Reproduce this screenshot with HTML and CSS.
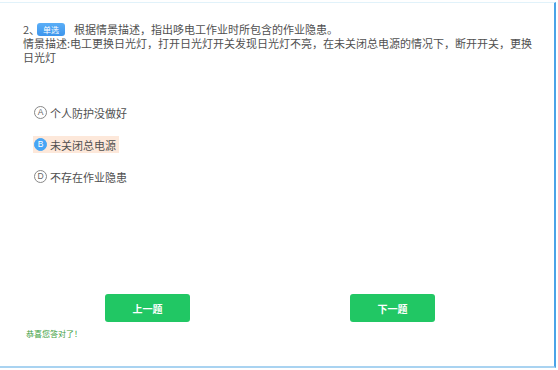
FILE: index.html
```html
<!DOCTYPE html>
<html lang="zh">
<head>
<meta charset="utf-8">
<link rel="stylesheet" href="styles.css">
</head>
<body>
<div class="frame">
  <div class="question">
    <div class="title">2、<span class="badge">单选</span>根据情景描述，指出哆电工作业时所包含的作业隐患。</div>
    <div class="desc">情景描述:电工更换日光灯，打开日光灯开关发现日光灯不亮，在未关闭总电源的情况下，断开开关，更换日光灯</div>
  </div>
  <ul class="options">
    <li class="option"><span class="mark">A</span><span class="label">个人防护没做好</span></li>
    <li class="option selected"><span class="mark">B</span><span class="label">未关闭总电源</span></li>
    <li class="option"><span class="mark">D</span><span class="label">不存在作业隐患</span></li>
  </ul>
  <div class="buttons">
    <button class="btn">上一题</button>
    <button class="btn">下一题</button>
  </div>
  <div class="feedback">恭喜您答对了！</div>
</div>
</body>
</html>
```

FILE: styles.css
```css
html, body {
  margin: 0;
  padding: 0;
  background: #ffffff;
}
body {
  font-family: "Noto Sans CJK SC", "Noto Sans", sans-serif;
  color: #505050;
}
.frame {
  box-sizing: border-box;
  margin-top: 2px;
  width: 556px;
  height: 366px;
  border-top: 1px solid #e1f2fa;
  border-right: 2px solid #4aa3e8;
  border-bottom: 2px solid #a9d3f1;
}
.question {
  padding: 19px 0 0 23px;
  width: 520px;
  font-size: 11px;
  line-height: 14px;
}
.badge {
  display: inline-block;
  margin: 0 9px 0 -3px;
  padding: 0 6px;
  height: 13px;
  line-height: 13px;
  font-size: 8px;
  color: #ffffff;
  background: linear-gradient(#5aaef7, #3d95ec);
  border-radius: 3px;
  vertical-align: 1px;
}
.options {
  list-style: none;
  margin: 40px 0 0 33px;
  padding: 0;
  display: flex;
  flex-direction: column;
  align-items: flex-start;
  gap: 15px;
}
.option {
  display: flex;
  align-items: center;
  gap: 3px;
  height: 17px;
  padding: 0 3px 0 1px;
  font-size: 11px;
  color: #505050;
}
.mark {
  box-sizing: border-box;
  width: 13px;
  height: 13px;
  border: 1px solid #888888;
  border-radius: 50%;
  font-family: "Liberation Sans", sans-serif;
  font-size: 8.5px;
  line-height: 11px;
  text-align: center;
  color: #666666;
}
.option.selected {
  background: #fde8da;
}
.option.selected .mark {
  border-color: #47a5f5;
  background: #47a5f5;
  color: #ffffff;
}
.buttons {
  display: flex;
  gap: 160px;
  margin: 109px 0 0 105px;
}
.btn {
  width: 85px;
  height: 28px;
  border: none;
  border-radius: 3px;
  background: #21c764;
  color: #ffffff;
  font-family: "Noto Sans CJK SC", sans-serif;
  font-size: 10px;
  font-weight: bold;
  padding: 0;
}
.feedback {
  margin: 7px 0 0 26px;
  font-size: 8px;
  line-height: 10px;
  color: #3e9e3e;
}
```
